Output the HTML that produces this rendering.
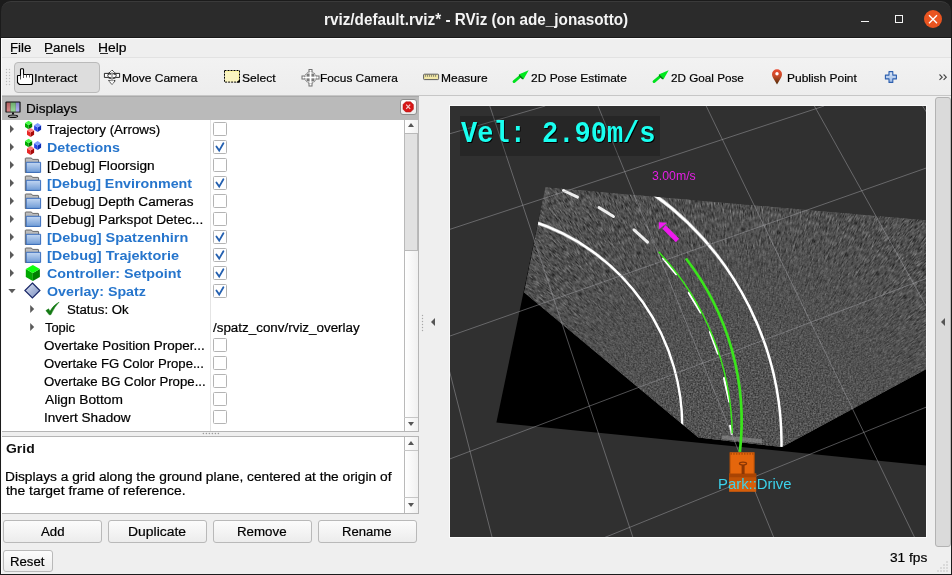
<!DOCTYPE html>
<html><head><meta charset="utf-8"><title>RViz</title><style>
html,body{margin:0;padding:0;width:952px;height:575px;overflow:hidden;background:#efefef;font-family:"Liberation Sans",sans-serif}
.a{position:absolute;box-sizing:border-box}
.t{position:absolute;white-space:pre;transform-origin:0 0}
.cb{position:absolute;width:14px;height:14px;box-sizing:border-box;border:1px solid #b3b3b3;background:#fff;border-radius:1px}
.btn{position:absolute;box-sizing:border-box;border:1px solid #b9b9b9;border-radius:3px;background:linear-gradient(#fcfcfc,#ececec)}
.arr{position:absolute;width:0;height:0;border-top:4px solid transparent;border-bottom:4px solid transparent;border-left:4px solid #5a5a5a}
</style></head><body>
<!-- window frame -->
<div class="a" style="left:0;top:0;width:952px;height:575px;background:#1b1b1b"></div>
<div class="a" style="left:1px;top:1px;width:950px;height:40px;background:#2b2b2b;border-radius:10px 10px 0 0;border-top:1px solid #3a3a3a"></div>
<div class="a" style="left:1px;top:37px;width:950px;height:1px;background:#191919"></div>
<div class="a" style="left:1px;top:38px;width:950px;height:536px;background:#efefef;box-shadow:inset 1px 1px 0 #fbfbfb"></div>
<!-- title bar controls -->
<div class="a" style="left:860.7px;top:20.8px;width:8.6px;height:1.2px;background:#f4f4f4"></div>
<div class="a" style="left:895px;top:15px;width:8.2px;height:8.2px;border:1.1px solid #f4f4f4"></div>
<div class="a" style="left:923.5px;top:9.8px;width:18.6px;height:18.6px;border-radius:50%;background:#e95420"></div>
<svg class="a" style="left:923px;top:9px" width="20" height="20" viewBox="0 0 20 20"><path d="M6 6.2 L14 14.2 M14 6.2 L6 14.2" stroke="#fff" stroke-width="1.4"/></svg>
<!-- menubar -->
<div class="a" style="left:2px;top:57px;width:949px;height:1px;background:#e2e2e2"></div>
<div class="a" style="left:11px;top:53px;width:6px;height:1px;background:#111"></div>
<div class="a" style="left:45.5px;top:53px;width:7px;height:1px;background:#2a2a2a"></div>
<div class="a" style="left:99.5px;top:53px;width:8px;height:1px;background:#2a2a2a"></div>
<!-- toolbar -->
<div class="a" style="left:2px;top:58px;width:949px;height:37px;background:linear-gradient(#f2f2f2,#ededed)"></div>
<div class="a" style="left:2px;top:95px;width:949px;height:1px;background:#c6c6c6"></div>
<svg class="a" style="left:4px;top:67px" width="8" height="22"><g fill="#bdbdbd"><circle cx="2.5" cy="2.5" r=".7"/><circle cx="5.5" cy="2.5" r=".7"/><circle cx="2.5" cy="5.5" r=".7"/><circle cx="5.5" cy="5.5" r=".7"/><circle cx="2.5" cy="8.5" r=".7"/><circle cx="5.5" cy="8.5" r=".7"/><circle cx="2.5" cy="11.5" r=".7"/><circle cx="5.5" cy="11.5" r=".7"/><circle cx="2.5" cy="14.5" r=".7"/><circle cx="5.5" cy="14.5" r=".7"/><circle cx="2.5" cy="17.5" r=".7"/><circle cx="5.5" cy="17.5" r=".7"/></g></svg>
<div class="a" style="left:14px;top:62px;width:86px;height:31px;background:#dddddd;border:1px solid #bababa;border-radius:4px"></div>
<!-- hand icon -->
<svg class="a" style="left:14px;top:64px" width="24" height="24" viewBox="14 64 24 24"><path d="M20.5 69.5 Q20.5 68.8 21.5 68.8 H22.6 Q23.5 68.8 23.5 69.5 V74.5 H32 Q32.5 74.5 32.5 75 V83.5 L31.5 84.5 H19.5 L17.5 82.5 V76 Q17.5 75.5 18 75.5 H20.5 Z" fill="#fff" stroke="#000" stroke-width="1.1" stroke-linejoin="round"/><path d="M20.5 75.5 V79.5 M23.5 74.5 V78 M26.5 74.5 V77.5 M29.5 74.5 V77.5" stroke="#444" stroke-width="0.9"/></svg>
<!-- move camera icon -->
<svg class="a" style="left:100px;top:66px" width="24" height="24" viewBox="100 66 24 24"><g fill="#fff" stroke="#111" stroke-width="0.9" stroke-linejoin="round">
<path d="M104.4 73.4 H108 Q110 72.6 112 72.6 Q114 72.6 116 73.4 H119.6 V77.4 H116 Q114 78.6 112 78.6 Q110 78.6 108 77.4 H104.4 Z"/>
<path d="M112 70 L116.2 74.2 H107.8 Z" stroke-dasharray="1.2 0.6"/>
<path d="M108.6 80.6 H115.4 L112 84.6 Z" stroke-dasharray="1.2 0.6"/>
<ellipse cx="112" cy="75.6" rx="4.2" ry="2.3" fill="none"/>
<path d="M108 77.5 Q112 80.2 116 77.5" fill="none" stroke="#555"/>
</g><path d="M112 72.5 V81" stroke="#a8a8a8" stroke-width="1.6"/></svg>
<!-- select icon -->
<svg class="a" style="left:218px;top:64px" width="28" height="24" viewBox="218 64 28 24"><rect x="224.5" y="70.5" width="15" height="11.6" fill="#fbf5c2" stroke="#000" stroke-width="1" stroke-dasharray="2 1"/><path d="M225.5 71.5 H238.5 V80" fill="none" stroke="#fff7a0" stroke-width="1"/><path d="M240 79 V82.6 H236.4 Z" fill="#000"/></svg>
<!-- focus camera icon -->
<svg class="a" style="left:298px;top:65px" width="24" height="24" viewBox="298 65 24 24"><g stroke="#6e6e6e" stroke-width="1">
<rect x="309" y="69.5" width="3" height="16.5" fill="#fff"/><rect x="302" y="76" width="17" height="3" fill="#fff"/>
<circle cx="310.5" cy="77.5" r="5.7" fill="#f2f2f2" stroke-dasharray="1.3 0.7"/></g>
<g fill="#7a7a7a"><rect x="306.6" y="73.6" width="3" height="3"/><rect x="311.4" y="73.6" width="3" height="3"/><rect x="306.6" y="78.4" width="3" height="3"/><rect x="311.4" y="78.4" width="3" height="3"/></g>
<path d="M310.5 71.5 V83.5 M304.5 77.5 H316.5" stroke="#fff" stroke-width="1.2"/></svg>
<!-- measure icon -->
<svg class="a" style="left:418px;top:64px" width="28" height="24" viewBox="418 64 28 24"><rect x="423.6" y="74.2" width="15" height="5.4" rx="0.8" fill="#f2e8a6" stroke="#5c5c5c" stroke-width="1"/><path d="M425.6 74.6 V76.8 M427.6 74.6 V76.8 M429.6 74.6 V76.8 M431.6 74.6 V76.8 M433.6 74.6 V76.8 M435.6 74.6 V76.8" stroke="#6a6a5a" stroke-width="0.8"/></svg>
<!-- 2d pose arrows -->
<svg class="a" style="left:505px;top:62px" width="30" height="28" viewBox="505 62 30 28"><path d="M514 81.6 L521.5 75.2" stroke="#00e21e" stroke-width="2.8" stroke-linecap="round"/><path d="M528.7 70.3 L518.6 74.6 L523.4 79.6 Z" fill="#00e81e"/><path d="M519.2 75.2 L522.8 79" stroke="#0a6a14" stroke-width="1.3"/></svg>
<svg class="a" style="left:645px;top:62px" width="30" height="28" viewBox="505 62 30 28"><path d="M514 81.6 L521.5 75.2" stroke="#00e21e" stroke-width="2.8" stroke-linecap="round"/><path d="M528.7 70.3 L518.6 74.6 L523.4 79.6 Z" fill="#00e81e"/><path d="M519.2 75.2 L522.8 79" stroke="#0a6a14" stroke-width="1.3"/></svg>
<!-- publish point pin -->
<svg class="a" style="left:766px;top:64px" width="24" height="24" viewBox="766 64 24 24"><defs><linearGradient id="pg" x1="0" y1="0" x2="0" y2="1"><stop offset="0" stop-color="#ea4a30"/><stop offset="0.45" stop-color="#c84a28"/><stop offset="1" stop-color="#4a2a06"/></linearGradient></defs><path d="M777 84.4 L773 77.8 Q772 76 772 74.3 A5 5 0 0 1 782 74.3 Q782 76 781 77.8 Z" fill="url(#pg)"/><circle cx="777" cy="73.8" r="1.7" fill="#fff"/></svg>
<!-- plus -->
<svg class="a" style="left:878px;top:64px" width="74" height="28" viewBox="878 64 74 28"><defs><linearGradient id="plg" x1="0" y1="0" x2="0" y2="1"><stop offset="0" stop-color="#dde9f8"/><stop offset="1" stop-color="#9cb9e4"/></linearGradient></defs><path d="M889 71.6 H892.8 V75.1 H896.4 V78.9 H892.8 V82.4 H889 V78.9 H885.4 V75.1 H889 Z" fill="url(#plg)" stroke="#2d5fae" stroke-width="1.1" stroke-linejoin="round"/><path d="M939.5 74.5 L942.2 77.2 L939.5 79.9 M943.6 74.5 L946.3 77.2 L943.6 79.9" fill="none" stroke="#444" stroke-width="1.1"/></svg>
<!-- left dock header -->
<div class="a" style="left:2px;top:96px;width:417px;height:1px;background:#a9a9a9"></div>
<div class="a" style="left:2px;top:97px;width:417px;height:23px;background:#bababa"></div>
<svg class="a" style="left:2px;top:98px" width="22" height="22" viewBox="2 98 22 22"><defs><linearGradient id="mg" x1="0" y1="0" x2="0" y2="1"><stop offset="0" stop-color="#000" stop-opacity="0.18"/><stop offset="1" stop-color="#fff" stop-opacity="0.15"/></linearGradient></defs><rect x="5.4" y="101.4" width="15.2" height="11.2" rx="1.2" fill="#111"/><rect x="6.6" y="102.6" width="4" height="9" fill="#d47272"/><rect x="10.6" y="102.6" width="5.2" height="9" fill="#84d084"/><rect x="15.8" y="102.6" width="3.6" height="9" fill="#a2a2f2"/><rect x="6.6" y="102.6" width="12.8" height="9" fill="url(#mg)"/><path d="M13 112.5 V114.6" stroke="#111" stroke-width="2"/><ellipse cx="13" cy="116.2" rx="4.6" ry="1.2" fill="none" stroke="#111" stroke-width="1.1"/></svg>
<div class="a" style="left:399.5px;top:99.3px;width:17px;height:16.2px;border-radius:3px;background:linear-gradient(#ffffff,#ececec);border:1px solid #8f8f8f"></div>
<svg class="a" style="left:394px;top:96px" width="26" height="24" viewBox="394 96 26 24"><path d="M405.8 101.8 H410.6 L413.4 104.6 V109.2 L410.6 112 H405.8 L403 109.2 V104.6 Z" fill="#d81818" stroke="#a80c0c" stroke-width="0.5"/><path d="M406.2 104.6 L410.2 108.8 M410.2 104.6 L406.2 108.8" stroke="#f4d0d0" stroke-width="1.2"/></svg>
<!-- tree -->
<div class="a" style="left:2px;top:120px;width:416px;height:312px;background:#fff;border-bottom:1px solid #b5b5b5;border-right:1px solid #b5b5b5"></div>
<div class="a" style="left:210px;top:120px;width:1px;height:311px;background:#e4e4e4"></div>
<!-- tree scrollbar -->
<div class="a" style="left:404px;top:120px;width:14px;height:311px;background:linear-gradient(90deg,#ffffff,#f0f0f0);border-left:1px solid #b9b9b9"></div>
<div class="a" style="left:404px;top:133px;width:14px;height:118px;background:#e1e1e1;border:1px solid #b9b9b9"></div>
<div class="a" style="left:404px;top:417px;width:14px;height:1px;background:#c6c6c6"></div>
<div class="a" style="left:407.5px;top:123px;width:0;height:0;border-left:3.5px solid transparent;border-right:3.5px solid transparent;border-bottom:4px solid #555"></div>
<div class="a" style="left:407.5px;top:422px;width:0;height:0;border-left:3.5px solid transparent;border-right:3.5px solid transparent;border-top:4px solid #555"></div>
<div class="a" style="left:418px;top:120px;width:1px;height:312px;background:#b5b5b5"></div>
<div class="a" style="left:418px;top:436px;width:1px;height:78px;background:#b5b5b5"></div>
<svg class="a" style="left:0;top:0" width="420" height="432" viewBox="0 0 420 432"><defs><linearGradient id="fg" x1="0" y1="0" x2="0" y2="1"><stop offset="0" stop-color="#c3d7f2"/><stop offset="1" stop-color="#6f9bd6"/></linearGradient><linearGradient id="fb" x1="0" y1="0" x2="0" y2="1"><stop offset="0" stop-color="#c4c4c4"/><stop offset="1" stop-color="#8c8c8c"/></linearGradient><linearGradient id="dg" x1="0" y1="0" x2="1" y2="1"><stop offset="0" stop-color="#dfe6f4"/><stop offset="0.5" stop-color="#a9b7d8"/><stop offset="1" stop-color="#7d8fc0"/></linearGradient></defs><path d="M10 125 L14 129 L10 133 Z" fill="#5a5a5a"/><polygon points="34.1,125.15 37.6,127.4 37.6,131.9 34.1,129.65" fill="#2a46e6"/><polygon points="37.6,127.4 41.1,125.15 41.1,129.65 37.6,131.9" fill="#0c2cb4"/><polygon points="37.6,122.9 41.1,125.15 37.6,127.4 34.1,125.15" fill="#7f9dff"/><polygon points="25,122.89999999999999 28.6,125.0 28.6,129.2 25,127.1" fill="#00b000"/><polygon points="28.6,125.0 32.2,122.89999999999999 32.2,127.1 28.6,129.2" fill="#007a00"/><polygon points="28.6,120.8 32.2,122.89999999999999 28.6,125.0 25,122.89999999999999" fill="#44ff44"/><polygon points="27,130.29999999999998 30.55,132.5 30.55,136.9 27,134.70000000000002" fill="#e82828"/><polygon points="30.55,132.5 34.1,130.29999999999998 34.1,134.70000000000002 30.55,136.9" fill="#a80808"/><polygon points="30.55,128.1 34.1,130.29999999999998 30.55,132.5 27,130.29999999999998" fill="#ff7a7a"/><rect x="213.5" y="122.5" width="13" height="13" fill="#fff" stroke="#b4b4b4" stroke-width="1" rx="1"/><path d="M10 143 L14 147 L10 151 Z" fill="#5a5a5a"/><polygon points="34.1,143.15 37.6,145.4 37.6,149.9 34.1,147.65" fill="#2a46e6"/><polygon points="37.6,145.4 41.1,143.15 41.1,147.65 37.6,149.9" fill="#0c2cb4"/><polygon points="37.6,140.9 41.1,143.15 37.6,145.4 34.1,143.15" fill="#7f9dff"/><polygon points="25,140.9 28.6,143.0 28.6,147.20000000000002 25,145.10000000000002" fill="#00b000"/><polygon points="28.6,143.0 32.2,140.9 32.2,145.10000000000002 28.6,147.20000000000002" fill="#007a00"/><polygon points="28.6,138.8 32.2,140.9 28.6,143.0 25,140.9" fill="#44ff44"/><polygon points="27,148.29999999999998 30.55,150.5 30.55,154.9 27,152.70000000000002" fill="#e82828"/><polygon points="30.55,150.5 34.1,148.29999999999998 34.1,152.70000000000002 30.55,154.9" fill="#a80808"/><polygon points="30.55,146.1 34.1,148.29999999999998 30.55,150.5 27,148.29999999999998" fill="#ff7a7a"/><rect x="213.5" y="140.5" width="13" height="13" fill="#fff" stroke="#b4b4b4" stroke-width="1" rx="1"/><path d="M216.4 146.4 L219.2 150.6 L223.4 143.2" fill="none" stroke="#2460b0" stroke-width="1.8" stroke-linecap="round"/><path d="M10 161 L14 165 L10 169 Z" fill="#5a5a5a"/><path d="M25.3 172.5 V158.5 Q25.3 158 26 158 H31.5 L32.5 159.4 H38 Q38.6 159.4 38.6 160 V172.5 Z" fill="url(#fb)" stroke="#5c5c5c" stroke-width="0.9"/><path d="M26.2 162.3 H40.6 V172.4 H26.2 Z" fill="url(#fg)" stroke="#3b6fbe" stroke-width="1"/><rect x="213.5" y="158.5" width="13" height="13" fill="#fff" stroke="#b4b4b4" stroke-width="1" rx="1"/><path d="M10 179 L14 183 L10 187 Z" fill="#5a5a5a"/><path d="M25.3 190.5 V176.5 Q25.3 176 26 176 H31.5 L32.5 177.4 H38 Q38.6 177.4 38.6 178 V190.5 Z" fill="url(#fb)" stroke="#5c5c5c" stroke-width="0.9"/><path d="M26.2 180.3 H40.6 V190.4 H26.2 Z" fill="url(#fg)" stroke="#3b6fbe" stroke-width="1"/><rect x="213.5" y="176.5" width="13" height="13" fill="#fff" stroke="#b4b4b4" stroke-width="1" rx="1"/><path d="M216.4 182.4 L219.2 186.6 L223.4 179.2" fill="none" stroke="#2460b0" stroke-width="1.8" stroke-linecap="round"/><path d="M10 197 L14 201 L10 205 Z" fill="#5a5a5a"/><path d="M25.3 208.5 V194.5 Q25.3 194 26 194 H31.5 L32.5 195.4 H38 Q38.6 195.4 38.6 196 V208.5 Z" fill="url(#fb)" stroke="#5c5c5c" stroke-width="0.9"/><path d="M26.2 198.3 H40.6 V208.4 H26.2 Z" fill="url(#fg)" stroke="#3b6fbe" stroke-width="1"/><rect x="213.5" y="194.5" width="13" height="13" fill="#fff" stroke="#b4b4b4" stroke-width="1" rx="1"/><path d="M10 215 L14 219 L10 223 Z" fill="#5a5a5a"/><path d="M25.3 226.5 V212.5 Q25.3 212 26 212 H31.5 L32.5 213.4 H38 Q38.6 213.4 38.6 214 V226.5 Z" fill="url(#fb)" stroke="#5c5c5c" stroke-width="0.9"/><path d="M26.2 216.3 H40.6 V226.4 H26.2 Z" fill="url(#fg)" stroke="#3b6fbe" stroke-width="1"/><rect x="213.5" y="212.5" width="13" height="13" fill="#fff" stroke="#b4b4b4" stroke-width="1" rx="1"/><path d="M10 233 L14 237 L10 241 Z" fill="#5a5a5a"/><path d="M25.3 244.5 V230.5 Q25.3 230 26 230 H31.5 L32.5 231.4 H38 Q38.6 231.4 38.6 232 V244.5 Z" fill="url(#fb)" stroke="#5c5c5c" stroke-width="0.9"/><path d="M26.2 234.3 H40.6 V244.4 H26.2 Z" fill="url(#fg)" stroke="#3b6fbe" stroke-width="1"/><rect x="213.5" y="230.5" width="13" height="13" fill="#fff" stroke="#b4b4b4" stroke-width="1" rx="1"/><path d="M216.4 236.4 L219.2 240.6 L223.4 233.2" fill="none" stroke="#2460b0" stroke-width="1.8" stroke-linecap="round"/><path d="M10 251 L14 255 L10 259 Z" fill="#5a5a5a"/><path d="M25.3 262.5 V248.5 Q25.3 248 26 248 H31.5 L32.5 249.4 H38 Q38.6 249.4 38.6 250 V262.5 Z" fill="url(#fb)" stroke="#5c5c5c" stroke-width="0.9"/><path d="M26.2 252.3 H40.6 V262.4 H26.2 Z" fill="url(#fg)" stroke="#3b6fbe" stroke-width="1"/><rect x="213.5" y="248.5" width="13" height="13" fill="#fff" stroke="#b4b4b4" stroke-width="1" rx="1"/><path d="M216.4 254.4 L219.2 258.6 L223.4 251.2" fill="none" stroke="#2460b0" stroke-width="1.8" stroke-linecap="round"/><path d="M10 269 L14 273 L10 277 Z" fill="#5a5a5a"/><polygon points="25.8,268.92499999999995 32.85,272.95 32.85,281.0 25.8,276.975" fill="#00a800"/><polygon points="32.85,272.95 39.9,268.92499999999995 39.9,276.975 32.85,281.0" fill="#008000"/><polygon points="32.85,264.9 39.9,268.92499999999995 32.85,272.95 25.8,268.92499999999995" fill="#10ff10"/><rect x="213.5" y="266.5" width="13" height="13" fill="#fff" stroke="#b4b4b4" stroke-width="1" rx="1"/><path d="M216.4 272.4 L219.2 276.6 L223.4 269.2" fill="none" stroke="#2460b0" stroke-width="1.8" stroke-linecap="round"/><path d="M8.3 289 H15.6 L12 293.3 Z" fill="#5a5a5a"/><path d="M32.4 283 L39.9 290.5 L32.4 298 L24.9 290.5 Z" fill="url(#dg)" stroke="#1a2868" stroke-width="1.2"/><rect x="213.5" y="284.5" width="13" height="13" fill="#fff" stroke="#b4b4b4" stroke-width="1" rx="1"/><path d="M216.4 290.4 L219.2 294.6 L223.4 287.2" fill="none" stroke="#2460b0" stroke-width="1.8" stroke-linecap="round"/><path d="M30.2 305 L34.2 309 L30.2 313 Z" fill="#5a5a5a"/><path d="M45.9 310.6 L48.6 308.8 L49.9 311.2 Q53.2 305.4 59.1 302.1 Q54.6 306.6 50.9 314.7 L49.2 314.8 Z" fill="#147a14" stroke="#147a14" stroke-width="0.5" stroke-linejoin="round"/><path d="M30.2 323 L34.2 327 L30.2 331 Z" fill="#5a5a5a"/><rect x="213.5" y="338.5" width="13" height="13" fill="#fff" stroke="#b4b4b4" stroke-width="1" rx="1"/><rect x="213.5" y="356.5" width="13" height="13" fill="#fff" stroke="#b4b4b4" stroke-width="1" rx="1"/><rect x="213.5" y="374.5" width="13" height="13" fill="#fff" stroke="#b4b4b4" stroke-width="1" rx="1"/><rect x="213.5" y="392.5" width="13" height="13" fill="#fff" stroke="#b4b4b4" stroke-width="1" rx="1"/><rect x="213.5" y="410.5" width="13" height="13" fill="#fff" stroke="#b4b4b4" stroke-width="1" rx="1"/></svg>

<!-- splitter -->
<svg class="a" style="left:201px;top:432px" width="26" height="4"><g fill="#9c9c9c"><circle cx="2.4" cy="1.5" r="0.75"/><circle cx="5.4" cy="1.5" r="0.75"/><circle cx="8.4" cy="1.5" r="0.75"/><circle cx="11.4" cy="1.5" r="0.75"/><circle cx="14.4" cy="1.5" r="0.75"/><circle cx="17.4" cy="1.5" r="0.75"/></g></svg>
<!-- description -->
<div class="a" style="left:2px;top:436px;width:417px;height:78px;background:#fff;border:1px solid #b5b5b5;border-left:none"></div>
<div class="a" style="left:404px;top:437px;width:14px;height:76px;background:linear-gradient(90deg,#ffffff,#f0f0f0);border-left:1px solid #b9b9b9"></div>
<div class="a" style="left:404px;top:450px;width:14px;height:1px;background:#c6c6c6"></div>
<div class="a" style="left:404px;top:497px;width:14px;height:1px;background:#c6c6c6"></div>
<div class="a" style="left:407.5px;top:441px;width:0;height:0;border-left:3.5px solid transparent;border-right:3.5px solid transparent;border-bottom:4px solid #555"></div>
<div class="a" style="left:407.5px;top:503px;width:0;height:0;border-left:3.5px solid transparent;border-right:3.5px solid transparent;border-top:4px solid #555"></div>
<!-- buttons -->
<div class="btn" style="left:3px;top:520px;width:99px;height:23px"></div>
<div class="btn" style="left:108px;top:520px;width:99px;height:23px"></div>
<div class="btn" style="left:213px;top:520px;width:99px;height:23px"></div>
<div class="btn" style="left:318px;top:520px;width:99px;height:23px"></div>
<div class="btn" style="left:3px;top:550px;width:50px;height:22px"></div>

<!-- left splitter handle -->
<svg class="a" style="left:420px;top:313px" width="5" height="20"><g fill="#a8a8a8"><circle cx="2.5" cy="2.5" r=".7"/><circle cx="2.5" cy="5.5" r=".7"/><circle cx="2.5" cy="8.5" r=".7"/><circle cx="2.5" cy="11.5" r=".7"/><circle cx="2.5" cy="14.5" r=".7"/><circle cx="2.5" cy="17.5" r=".7"/></g></svg>
<div class="a" style="left:431px;top:318px;width:0;height:0;border-top:4px solid transparent;border-bottom:4px solid transparent;border-right:4.5px solid #555"></div>

<!-- viewport -->
<div class="a" style="left:449px;top:105px;width:478px;height:433px;background:#fafafa"></div>
<svg class="a" style="left:450px;top:106px" width="476" height="431" viewBox="450 106 476 431">
<defs>
<filter id="nz" x="0" y="0" width="1" height="1" filterUnits="objectBoundingBox" color-interpolation-filters="sRGB">
<feTurbulence type="fractalNoise" baseFrequency="1.1 0.18" numOctaves="3" seed="7"/>
<feColorMatrix type="matrix" values="0.62 0 0 0 0.005  0.62 0 0 0 0.005  0.62 0 0 0 0.005  0 0 0 0 1"/>
<feComposite in2="SourceGraphic" operator="in"/>
</filter>
<filter id="nz2" x="0" y="0" width="1" height="1" filterUnits="objectBoundingBox" color-interpolation-filters="sRGB">
<feTurbulence type="fractalNoise" baseFrequency="0.6" numOctaves="2" seed="3"/>
<feColorMatrix type="matrix" values="0.42 0 0 0 0.11  0.42 0 0 0 0.11  0.42 0 0 0 0.11  0 0 0 0 1"/>
<feComposite in2="SourceGraphic" operator="in"/>
</filter>
<radialGradient id="ng" gradientUnits="userSpaceOnUse" cx="741" cy="462" r="260"><stop offset="0" stop-color="#fff"/><stop offset="0.35" stop-color="#fff"/><stop offset="1" stop-color="#fff" stop-opacity="0"/></radialGradient>
<mask id="nm" maskUnits="userSpaceOnUse" x="450" y="106" width="476" height="431"><rect x="450" y="106" width="476" height="431" fill="url(#ng)"/></mask>
<linearGradient id="fg2" gradientUnits="userSpaceOnUse" x1="0" y1="190" x2="0" y2="290"><stop offset="0" stop-color="#fff"/><stop offset="1" stop-color="#fff" stop-opacity="0"/></linearGradient>
<mask id="fm" maskUnits="userSpaceOnUse" x="450" y="106" width="476" height="431"><rect x="450" y="106" width="476" height="431" fill="url(#fg2)"/></mask>
<filter id="bl" x="-20%" y="-20%" width="140%" height="140%"><feGaussianBlur stdDeviation="0.7"/></filter>
<clipPath id="vc"><rect x="450" y="106" width="476" height="431"/></clipPath>
<clipPath id="nc"><polygon points="545.4,187.2 926,220.3 926,369.2 782,447 698.3,437.5 524.2,292.4"/></clipPath>
</defs>
<rect x="450" y="106" width="476" height="431" fill="#303030"/>
<g clip-path="url(#vc)">
<polygon points="545.4,187.2 960,223.3 960,468.8 496.4,422.6" fill="#000"/>
<polygon points="545.4,187.2 926,220.3 926,369.2 782,447 698.3,437.5 524.2,292.4" fill="#505050"/>
<g clip-path="url(#nc)">
<clipPath id="sc0"><polygon points="741,462 157.3,75.6 232.0,-18.6"/></clipPath>
<g clip-path="url(#sc0)"><g transform="rotate(-51.6 741 462)"><rect x="341" y="42" width="800" height="840" fill="#fff" filter="url(#nz)"/></g></g>
<clipPath id="sc1"><polygon points="741,462 223.7,-9.6 312.1,-91.2"/></clipPath>
<g clip-path="url(#sc1)"><g transform="rotate(-42.7 741 462)"><rect x="341" y="42" width="800" height="840" fill="#fff" filter="url(#nz)"/></g></g>
<clipPath id="sc2"><polygon points="741,462 302.5,-83.6 402.4,-150.7"/></clipPath>
<g clip-path="url(#sc2)"><g transform="rotate(-33.9 741 462)"><rect x="341" y="42" width="800" height="840" fill="#fff" filter="url(#nz)"/></g></g>
<clipPath id="sc3"><polygon points="741,462 391.8,-144.7 500.8,-195.5"/></clipPath>
<g clip-path="url(#sc3)"><g transform="rotate(-25.0 741 462)"><rect x="341" y="42" width="800" height="840" fill="#fff" filter="url(#nz)"/></g></g>
<clipPath id="sc4"><polygon points="741,462 489.3,-191.2 604.9,-224.6"/></clipPath>
<g clip-path="url(#sc4)"><g transform="rotate(-16.1 741 462)"><rect x="341" y="42" width="800" height="840" fill="#fff" filter="url(#nz)"/></g></g>
<clipPath id="sc5"><polygon points="741,462 592.9,-222.2 712.2,-237.4"/></clipPath>
<g clip-path="url(#sc5)"><g transform="rotate(-7.3 741 462)"><rect x="341" y="42" width="800" height="840" fill="#fff" filter="url(#nz)"/></g></g>
<clipPath id="sc6"><polygon points="741,462 700.0,-236.8 820.2,-233.5"/></clipPath>
<g clip-path="url(#sc6)"><g transform="rotate(1.6 741 462)"><rect x="341" y="42" width="800" height="840" fill="#fff" filter="url(#nz)"/></g></g>
<clipPath id="sc7"><polygon points="741,462 808.1,-234.8 926.4,-213.0"/></clipPath>
<g clip-path="url(#sc7)"><g transform="rotate(10.4 741 462)"><rect x="341" y="42" width="800" height="840" fill="#fff" filter="url(#nz)"/></g></g>
<clipPath id="sc8"><polygon points="741,462 914.6,-216.1 1028.1,-176.4"/></clipPath>
<g clip-path="url(#sc8)"><g transform="rotate(19.3 741 462)"><rect x="341" y="42" width="800" height="840" fill="#fff" filter="url(#nz)"/></g></g>
<clipPath id="sc9"><polygon points="741,462 1016.9,-181.3 1123.0,-124.6"/></clipPath>
<g clip-path="url(#sc9)"><g transform="rotate(28.1 741 462)"><rect x="341" y="42" width="800" height="840" fill="#fff" filter="url(#nz)"/></g></g>
<clipPath id="sc10"><polygon points="741,462 1112.7,-131.2 1208.7,-58.8"/></clipPath>
<g clip-path="url(#sc10)"><g transform="rotate(37.0 741 462)"><rect x="341" y="42" width="800" height="840" fill="#fff" filter="url(#nz)"/></g></g>
<clipPath id="sc11"><polygon points="741,462 1199.6,-66.9 1283.4,19.4"/></clipPath>
<g clip-path="url(#sc11)"><g transform="rotate(45.9 741 462)"><rect x="341" y="42" width="800" height="840" fill="#fff" filter="url(#nz)"/></g></g>
<clipPath id="sc12"><polygon points="741,462 1275.5,10.0 1345.0,108.2"/></clipPath>
<g clip-path="url(#sc12)"><g transform="rotate(54.7 741 462)"><rect x="341" y="42" width="800" height="840" fill="#fff" filter="url(#nz)"/></g></g>
<clipPath id="sc13"><polygon points="741,462 1338.8,97.7 1392.3,205.4"/></clipPath>
<g clip-path="url(#sc13)"><g transform="rotate(63.6 741 462)"><rect x="341" y="42" width="800" height="840" fill="#fff" filter="url(#nz)"/></g></g>
</g>
<polygon points="545.4,187.2 926,220.3 926,369.2 782,447 698.3,437.5 524.2,292.4" fill="#fff" filter="url(#nz2)" mask="url(#nm)"/>
<g clip-path="url(#nc)"><path d="M722 437.2 L762 441.2" stroke="#888" stroke-width="4" opacity="0.7"/></g>
<g clip-path="url(#nc)" fill="none" stroke="#fff" stroke-linecap="round">
<g mask="url(#fm)" filter="url(#bl)" opacity="0.75"><path d="M530.90 220.75 A215.47 215.47 0 0 1 682.05 435.71" stroke-width="3.6"/><path d="M653.32 193.93 A307.54 307.54 0 0 1 781.41 451.70" stroke-width="3.6"/></g>
<path d="M530.90 220.75 A215.47 215.47 0 0 1 682.05 435.71" stroke-width="2.4"/>
<path d="M653.32 193.93 A307.54 307.54 0 0 1 781.41 451.70" stroke-width="2.5"/>
<g filter="url(#bl)" stroke-width="3" opacity="0.9"><path d="M563.5 190.5 L577.5 197.2 M599 207.5 L613.5 216.5 M634 229.8 L647.5 242.2"/></g>
<path d="M663.2 258.6 L676.2 274.2 M688.8 293 L700.6 312.4 M710 332 L717.9 353.6 M724 378 L729.2 401.4 M730.1 425.8 L731.8 434" stroke-width="2.2"/>
</g>
<g stroke="rgba(160,160,164,0.5)" stroke-width="1" fill="none">
<line x1="381.6" y1="106" x2="492.0" y2="537"/>
<line x1="489.8" y1="106" x2="632.8" y2="537"/>
<line x1="598.0" y1="106" x2="773.6" y2="537"/>
<line x1="706.2" y1="106" x2="914.4" y2="537"/>
<line x1="814.4" y1="106" x2="1055.2" y2="537"/>
<line x1="922.6" y1="106" x2="1196.0" y2="537"/>
<line x1="450" y1="133.7" x2="545.3" y2="106"/>
<line x1="450" y1="229.3" x2="824.1" y2="106"/>
<line x1="450" y1="336" x2="926" y2="168.1"/>
<line x1="450" y1="458.9" x2="926" y2="278.6"/>
<line x1="450" y1="600.2" x2="926" y2="407.2"/>
</g>
<path d="M658.55 251.84 A269.59 269.59 0 0 1 732.24 433.50" fill="none" stroke="#3be41c" stroke-width="1.5"/>
<path d="M685.97 258.49 A265.58 265.58 0 0 1 739.88 451.85" fill="none" stroke="#3be41c" stroke-width="2.7"/>
<g fill="#ee1aee"><path d="M677.5 240.5 L664 227" stroke="#ee1aee" stroke-width="4.6"/><path d="M658.7 222.2 L667 222.8 L659.2 229.2 Z"/></g>
<rect x="460" y="116" width="200" height="40" fill="rgba(0,0,0,0.2)"/>
<g>
<rect x="730" y="452.3" width="24.2" height="21.8" fill="#e5660c"/>
<rect x="729.1" y="473.6" width="27.1" height="18.2" fill="#d65e0a"/>
<path d="M730.5 453.8 H753.5" stroke="#a84604" stroke-width="2" stroke-dasharray="1.5 1.2" opacity="0.8"/>
<rect x="729.1" y="473.6" width="27.1" height="4" fill="#a84404"/>
<rect x="729.1" y="478" width="27.1" height="3" fill="#c05206"/>
<ellipse cx="743" cy="463.6" rx="3.6" ry="1.4" fill="none" stroke="#8a3604" stroke-width="1.2"/>
<rect x="741.6" y="465" width="3" height="9" fill="#8a3604"/>
<path d="M730 452.3 V474 M754.2 452.3 V474" stroke="#b04c06" stroke-width="1"/>
</g>
</g></svg>

<!-- right strip -->
<div class="a" style="left:935px;top:97px;width:16px;height:450px;background:#dadada;border:1px solid #b3b3b3;border-radius:3px"></div>
<div class="a" style="left:940.5px;top:318px;width:0;height:0;border-top:4px solid transparent;border-bottom:4px solid transparent;border-right:4.5px solid #555"></div>
<!-- size grip -->
<svg class="a" style="left:936px;top:560px" width="14" height="13"><g fill="#b5b5b5"><circle cx="11" cy="2" r=".7"/><circle cx="8" cy="5" r=".7"/><circle cx="11" cy="5" r=".7"/><circle cx="5" cy="8" r=".7"/><circle cx="8" cy="8" r=".7"/><circle cx="11" cy="8" r=".7"/><circle cx="2" cy="11" r=".7"/><circle cx="5" cy="11" r=".7"/><circle cx="8" cy="11" r=".7"/><circle cx="11" cy="11" r=".7"/></g></svg>

<div class="t" style="left:323.62px;top:10.00px;font-size:15.6px;line-height:20px;font-weight:700;font-family:'Liberation Sans';color:#f4f4f4;transform:scaleX(0.9796);">rviz/default.rviz* - RViz (on ade_jonasotto)</div>
<div class="t" style="left:10.42px;top:40.00px;font-size:12.3px;line-height:16px;font-weight:400;font-family:'Liberation Sans';color:#000000;transform:scaleX(1.0778);-webkit-text-stroke:0.2px #000000;">File</div>
<div class="t" style="left:44.22px;top:40.00px;font-size:12.3px;line-height:16px;font-weight:400;font-family:'Liberation Sans';color:#000000;transform:scaleX(1.0839);-webkit-text-stroke:0.2px #000000;">Panels</div>
<div class="t" style="left:98.17px;top:40.00px;font-size:12.3px;line-height:16px;font-weight:400;font-family:'Liberation Sans';color:#000000;transform:scaleX(1.1276);-webkit-text-stroke:0.2px #000000;">Help</div>
<div class="t" style="left:34.19px;top:70.00px;font-size:11.7px;line-height:15px;font-weight:400;font-family:'Liberation Sans';color:#000000;transform:scaleX(1.1141);-webkit-text-stroke:0.2px #000000;">Interact</div>
<div class="t" style="left:121.67px;top:70.00px;font-size:11.7px;line-height:15px;font-weight:400;font-family:'Liberation Sans';color:#000000;transform:scaleX(1.0280);-webkit-text-stroke:0.2px #000000;">Move Camera</div>
<div class="t" style="left:241.98px;top:70.00px;font-size:11.7px;line-height:15px;font-weight:400;font-family:'Liberation Sans';color:#000000;transform:scaleX(1.0323);-webkit-text-stroke:0.2px #000000;">Select</div>
<div class="t" style="left:320.39px;top:70.00px;font-size:11.7px;line-height:15px;font-weight:400;font-family:'Liberation Sans';color:#000000;transform:scaleX(1.0156);-webkit-text-stroke:0.2px #000000;">Focus Camera</div>
<div class="t" style="left:441.18px;top:70.00px;font-size:11.7px;line-height:15px;font-weight:400;font-family:'Liberation Sans';color:#000000;transform:scaleX(1.0246);-webkit-text-stroke:0.2px #000000;">Measure</div>
<div class="t" style="left:531.19px;top:70.00px;font-size:11.7px;line-height:15px;font-weight:400;font-family:'Liberation Sans';color:#000000;transform:scaleX(1.0245);-webkit-text-stroke:0.2px #000000;">2D Pose Estimate</div>
<div class="t" style="left:671.00px;top:70.00px;font-size:11.7px;line-height:15px;font-weight:400;font-family:'Liberation Sans';color:#000000;transform:scaleX(1.0009);-webkit-text-stroke:0.2px #000000;">2D Goal Pose</div>
<div class="t" style="left:786.58px;top:70.00px;font-size:11.7px;line-height:15px;font-weight:400;font-family:'Liberation Sans';color:#000000;transform:scaleX(1.0231);-webkit-text-stroke:0.2px #000000;">Publish Point</div>
<div class="t" style="left:26.46px;top:99.50px;font-size:13.0px;line-height:17px;font-weight:400;font-family:'Liberation Sans';color:#000000;transform:scaleX(1.0414);-webkit-text-stroke:0.2px #000000;">Displays</div>
<div class="t" style="left:46.88px;top:122.00px;font-size:12.3px;line-height:16px;font-weight:400;font-family:'Liberation Sans';color:#000000;transform:scaleX(1.0872);-webkit-text-stroke:0.2px #000000;">Trajectory (Arrows)</div>
<div class="t" style="left:46.57px;top:140.00px;font-size:12.3px;line-height:16px;font-weight:700;font-family:'Liberation Sans';color:#2675cc;transform:scaleX(1.1583);">Detections</div>
<div class="t" style="left:46.61px;top:158.00px;font-size:12.3px;line-height:16px;font-weight:400;font-family:'Liberation Sans';color:#000000;transform:scaleX(1.1084);-webkit-text-stroke:0.2px #000000;">[Debug] Floorsign</div>
<div class="t" style="left:46.80px;top:176.00px;font-size:12.3px;line-height:16px;font-weight:700;font-family:'Liberation Sans';color:#2675cc;transform:scaleX(1.1604);">[Debug] Environment</div>
<div class="t" style="left:46.62px;top:194.00px;font-size:12.3px;line-height:16px;font-weight:400;font-family:'Liberation Sans';color:#000000;transform:scaleX(1.1043);-webkit-text-stroke:0.2px #000000;">[Debug] Depth Cameras</div>
<div class="t" style="left:46.61px;top:212.00px;font-size:12.3px;line-height:16px;font-weight:400;font-family:'Liberation Sans';color:#000000;transform:scaleX(1.1093);-webkit-text-stroke:0.2px #000000;">[Debug] Parkspot Detec...</div>
<div class="t" style="left:46.79px;top:230.00px;font-size:12.3px;line-height:16px;font-weight:700;font-family:'Liberation Sans';color:#2675cc;transform:scaleX(1.1753);">[Debug] Spatzenhirn</div>
<div class="t" style="left:46.79px;top:248.00px;font-size:12.3px;line-height:16px;font-weight:700;font-family:'Liberation Sans';color:#2675cc;transform:scaleX(1.1777);">[Debug] Trajektorie</div>
<div class="t" style="left:46.92px;top:266.00px;font-size:12.3px;line-height:16px;font-weight:700;font-family:'Liberation Sans';color:#2675cc;transform:scaleX(1.1630);">Controller: Setpoint</div>
<div class="t" style="left:46.92px;top:284.00px;font-size:12.3px;line-height:16px;font-weight:700;font-family:'Liberation Sans';color:#2675cc;transform:scaleX(1.1572);">Overlay: Spatz</div>
<div class="t" style="left:67.06px;top:302.00px;font-size:12.3px;line-height:16px;font-weight:400;font-family:'Liberation Sans';color:#000000;transform:scaleX(1.0742);-webkit-text-stroke:0.2px #000000;">Status: Ok</div>
<div class="t" style="left:44.79px;top:320.00px;font-size:12.3px;line-height:16px;font-weight:400;font-family:'Liberation Sans';color:#000000;transform:scaleX(1.0473);-webkit-text-stroke:0.2px #000000;">Topic</div>
<div class="t" style="left:44.45px;top:338.00px;font-size:12.3px;line-height:16px;font-weight:400;font-family:'Liberation Sans';color:#000000;transform:scaleX(1.0931);-webkit-text-stroke:0.2px #000000;">Overtake Position Proper...</div>
<div class="t" style="left:44.47px;top:356.00px;font-size:12.3px;line-height:16px;font-weight:400;font-family:'Liberation Sans';color:#000000;transform:scaleX(1.0683);-webkit-text-stroke:0.2px #000000;">Overtake FG Color Prope...</div>
<div class="t" style="left:44.46px;top:374.00px;font-size:12.3px;line-height:16px;font-weight:400;font-family:'Liberation Sans';color:#000000;transform:scaleX(1.0754);-webkit-text-stroke:0.2px #000000;">Overtake BG Color Prope...</div>
<div class="t" style="left:45.00px;top:392.00px;font-size:12.3px;line-height:16px;font-weight:400;font-family:'Liberation Sans';color:#000000;transform:scaleX(1.1161);-webkit-text-stroke:0.2px #000000;">Align Bottom</div>
<div class="t" style="left:43.79px;top:410.00px;font-size:12.3px;line-height:16px;font-weight:400;font-family:'Liberation Sans';color:#000000;transform:scaleX(1.0999);-webkit-text-stroke:0.2px #000000;">Invert Shadow</div>
<div class="t" style="left:212.80px;top:320.00px;font-size:12.3px;line-height:16px;font-weight:400;font-family:'Liberation Sans';color:#000000;transform:scaleX(1.0896);-webkit-text-stroke:0.2px #000000;">/spatz_conv/rviz_overlay</div>
<div class="t" style="left:5.73px;top:441.00px;font-size:12.3px;line-height:16px;font-weight:700;font-family:'Liberation Sans';color:#111;transform:scaleX(1.1341);">Grid</div>
<div class="t" style="left:5.18px;top:469.00px;font-size:12.3px;line-height:16px;font-weight:400;font-family:'Liberation Sans';color:#000000;transform:scaleX(1.1172);-webkit-text-stroke:0.2px #000000;">Displays a grid along the ground plane, centered at the origin of</div>
<div class="t" style="left:6.19px;top:483.00px;font-size:12.3px;line-height:16px;font-weight:400;font-family:'Liberation Sans';color:#000000;transform:scaleX(1.1273);-webkit-text-stroke:0.2px #000000;">the target frame of reference.</div>
<div class="t" style="left:40.80px;top:524.00px;font-size:12.3px;line-height:16px;font-weight:400;font-family:'Liberation Sans';color:#000000;transform:scaleX(1.0736);-webkit-text-stroke:0.2px #000000;">Add</div>
<div class="t" style="left:127.87px;top:524.00px;font-size:12.3px;line-height:16px;font-weight:400;font-family:'Liberation Sans';color:#000000;transform:scaleX(1.1319);-webkit-text-stroke:0.2px #000000;">Duplicate</div>
<div class="t" style="left:237.12px;top:524.00px;font-size:12.3px;line-height:16px;font-weight:400;font-family:'Liberation Sans';color:#000000;transform:scaleX(1.0822);-webkit-text-stroke:0.2px #000000;">Remove</div>
<div class="t" style="left:342.44px;top:524.00px;font-size:12.3px;line-height:16px;font-weight:400;font-family:'Liberation Sans';color:#000000;transform:scaleX(1.0634);-webkit-text-stroke:0.2px #000000;">Rename</div>
<div class="t" style="left:10.43px;top:554.00px;font-size:12.3px;line-height:16px;font-weight:400;font-family:'Liberation Sans';color:#000000;transform:scaleX(1.0703);-webkit-text-stroke:0.2px #000000;">Reset</div>
<div class="t" style="left:889.78px;top:549.00px;font-size:13.0px;line-height:17px;font-weight:400;font-family:'Liberation Sans';color:#000000;transform:scaleX(1.0545);-webkit-text-stroke:0.2px #000000;">31 fps</div>
<div class="t" style="left:651.72px;top:167.00px;font-size:13.0px;line-height:17px;font-weight:400;font-family:'Liberation Sans';color:#e61ee6;transform:scaleX(0.9462);">3.00m/s</div>
<div class="t" style="left:718.36px;top:474.60px;font-size:14.3px;line-height:19px;font-weight:400;font-family:'Liberation Sans';color:#3cd2eb;transform:scaleX(1.0396);">Park::Drive</div>
<div class="t" style="left:460.90px;top:115.20px;font-size:30px;line-height:39px;font-weight:700;font-family:'Liberation Mono';color:#19fff0;transform:scaleX(0.9005);text-shadow:1px 1px 0 #000;">Vel: 2.90m/s</div>
</body></html>
